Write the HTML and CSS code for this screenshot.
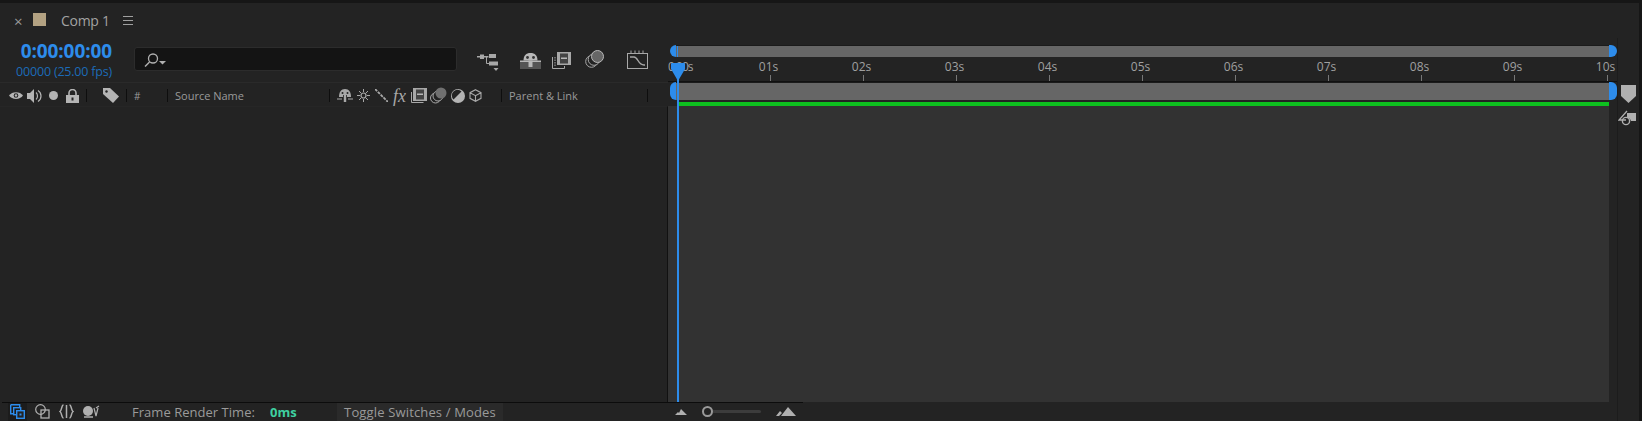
FILE: index.html
```html
<!DOCTYPE html>
<html lang="en">
<head>
<meta charset="UTF-8">
<title>Comp 1</title>
<link rel="stylesheet" href="styles.css">
</head>
<body>

<div id="panel">
    <div class="tabbar">
        <span class="close">×</span>
        <span class="swatch"></span>
        <span class="tabname">Comp 1</span>
        <svg class="menu" width="10" height="9" viewBox="0 0 10 9"><path d="M0 .5h10M0 4.5h10M0 8.5h10" stroke="#a0a0a0"/></svg>
    </div>

    <div class="main">
        <div class="left">
            <div class="controls">
                <div class="timecode">
                    <div class="time">0:00:00:00</div>
                    <div class="fps">00000 (25.00 fps)</div>
                </div>
                <div class="search">
                    <svg width="22" height="14" viewBox="0 0 22 14"><circle cx="9" cy="5.500" r="4.500" fill="none" stroke="#b0b0b0" stroke-width="1.300"/><path d="M5.500 9L1 13.500" stroke="#b0b0b0" stroke-width="1.500"/><path d="M15 8h7l-3.500 3.500z" fill="#b0b0b0"/></svg>
                </div>
                <div class="tools">
                    <svg class="tool-flow" width="22" height="18" viewBox="0 0 22 18"><path d="M0 3h3V1.500h4V3h4.500v1.500H7V6H3V4.500H0z" fill="#a8a8a8"/><path d="M9.500 4v6.500H13" fill="none" stroke="#a8a8a8"/><rect x="12" y="1" width="7" height="4" fill="#a8a8a8"/><rect x="12" y="8.500" width="9" height="4" fill="#a8a8a8"/><path d="M16.500 15h5l-2.500 3z" fill="#a8a8a8"/></svg>
                    <svg class="tool-shy" width="21" height="17" viewBox="0 0 21 17"><rect y="10" width="21" height="7" fill="#555"/><path d="M3.500 8.500C3.500 3.500 6 1 10.500 1s7 2.500 7 7.500z" fill="#b8b8b8"/><rect y="8.500" width="21" height="1.500" fill="#b8b8b8"/><rect x="8.500" y="8.500" width="4" height="6.500" fill="#b8b8b8"/><circle cx="7.500" cy="5.500" r="1.400" fill="#333"/><circle cx="13.500" cy="5.500" r="1.400" fill="#333"/></svg>
                    <svg class="tool-blend" width="19" height="18" viewBox="0 0 19 18"><path d="M.5 6v11.500h12V15" fill="none" stroke="#a8a8a8"/><path d="M3 6v9" stroke="#a8a8a8" stroke-dasharray="1.500 1"/><rect x="5" y="1" width="14" height="13" fill="#a8a8a8"/><rect x="8" y="2.500" width="8" height="10" fill="#444"/><rect x="9" y="6.500" width="6" height="1.500" fill="#b8b8b8"/></svg>
                    <svg class="tool-blur" width="19" height="18" viewBox="0 0 19 18"><circle cx="6.500" cy="11.500" r="5.800" fill="none" stroke="#a8a8a8"/><circle cx="9" cy="9.500" r="5.800" fill="#232323" stroke="#a8a8a8"/><circle cx="12.500" cy="6.500" r="6" fill="#666" stroke="#b8b8b8"/></svg>
                    <svg class="tool-graph" width="21" height="19" viewBox="0 0 21 19"><rect x=".5" y="3.500" width="20" height="15" fill="none" stroke="#a8a8a8"/><path d="M4 .5v3M8 .5v3M12 .5v3M16 .5v3" stroke="#a8a8a8"/><path d="M3 7h4c4 0 4 8 10 8h1" fill="none" stroke="#a8a8a8" stroke-width="1.300"/></svg>
                </div>
            </div>

            <div class="columns">
                <svg class="col-eye" width="14" height="9" viewBox="0 0 14 9"><path d="M0 4.500C3 0 11 0 14 4.500 11 9 3 9 0 4.500z" fill="#b4b4b4"/><circle cx="7" cy="4.500" r="2.300" fill="#232323"/><circle cx="7" cy="4.500" r="1.200" fill="#b4b4b4"/></svg>
                <svg class="col-sound" width="16" height="14" viewBox="0 0 16 14"><path d="M0 4h3l4-4v14l-4-4H0z" fill="#b4b4b4"/><path d="M9 3.500c2 1.500 2 5.500 0 7M11 1.500c4 2.500 4 8.500 0 11" fill="none" stroke="#b4b4b4" stroke-width="1.200"/></svg>
                <span class="col-dot"></span>
                <svg class="col-lock" width="13" height="14" viewBox="0 0 13 14"><path d="M3 6V4a3.500 3.500 0 0 1 7 0v2" fill="none" stroke="#b4b4b4" stroke-width="1.600"/><rect y="6" width="13" height="8" fill="#b4b4b4"/><rect x="5.500" y="8.500" width="2" height="3" fill="#232323"/></svg>
                <span class="sep sep-a"></span>
                <svg class="col-tag" width="16" height="15" viewBox="0 0 16 15"><path d="M0 0h7l9 8.500L10 15 0 6z" fill="#b4b4b4"/><circle cx="3.500" cy="3.500" r="1.200" fill="#232323"/></svg>
                <span class="sep sep-b"></span>
                <span class="col-num">#</span>
                <span class="sep sep-c"></span>
                <span class="col-source">Source Name</span>
                <span class="sep sep-d"></span>
                <svg class="sw-shy" width="16" height="13" viewBox="0 0 16 13"><path d="M2 8C2 3 4 0 8 0s6 3 6 8h-4V6H6v2z" fill="#a8a8a8"/><rect x="6.800" y="6" width="2.400" height="7" fill="#a8a8a8"/><path d="M0 10h5M11 10h5" stroke="#a8a8a8"/><circle cx="5.500" cy="4" r="1" fill="#232323"/><circle cx="10.500" cy="4" r="1" fill="#232323"/></svg>
                <svg class="sw-sun" width="13" height="13" viewBox="0 0 13 13"><circle cx="6.500" cy="6.500" r="2.500" fill="none" stroke="#a8a8a8" stroke-width="1.200"/><path d="M6.500 0v3M6.500 10v3M0 6.500h3M10 6.500h3M2 2l2 2M9 9l2 2M11 2L9 4M4 9l-2 2" stroke="#a8a8a8"/></svg>
                <svg class="sw-line" width="13" height="13" viewBox="0 0 13 13"><path d="M0 0l13 13" stroke="#a8a8a8" stroke-width="1.800" stroke-dasharray="3 1"/></svg>
                <span class="sw-fx">fx</span>
                <svg class="sw-frame" width="16" height="15" viewBox="0 0 16 15"><path d="M.5 4v10.500h12" fill="none" stroke="#a8a8a8"/><rect x="2" y="0" width="14" height="13" fill="#a8a8a8"/><rect x="5" y="1.500" width="8" height="10" fill="#444"/><rect x="6" y="5.500" width="6" height="1.500" fill="#b8b8b8"/></svg>
                <svg class="sw-blur" width="17" height="17" viewBox="0 0 17 17"><circle cx="5.500" cy="11" r="5" fill="none" stroke="#a8a8a8"/><circle cx="8" cy="9" r="5" fill="#232323" stroke="#a8a8a8"/><circle cx="11" cy="6" r="5.500" fill="#707070"/></svg>
                <svg class="sw-adj" width="14" height="14" viewBox="0 0 14 14"><circle cx="7" cy="7" r="7" fill="#b4b4b4"/><path d="M2.500 10.500A5.500 5.500 0 0 1 10.500 2.500z" fill="#232323"/></svg>
                <svg class="sw-cube" width="13" height="13" viewBox="0 0 13 13"><path d="M6.500.7l5.500 3v5.600l-5.500 3-5.500-3V3.700zM1 3.700l5.500 3 5.500-3M6.500 6.700v5.600" fill="none" stroke="#a8a8a8" stroke-width="1.100"/></svg>
                <span class="sep sep-e"></span>
                <span class="col-parent">Parent &amp; Link</span>
                <span class="sep sep-f"></span>
            </div>
            <div class="layers"></div>
        </div>

        <div class="timeline">
            <div class="navbar">
                <span class="handle handle-l"></span>
                <div class="bar"><span class="bar-mark"></span></div>
                <span class="handle handle-r"></span>
            </div>
            <div class="ruler">
                <div class="ticks">
                    <div class="tick tick-first"><span>0:00s</span></div>
                    <div class="tick"><span>01s</span><i></i></div>
                    <div class="tick"><span>02s</span><i></i></div>
                    <div class="tick"><span>03s</span><i></i></div>
                    <div class="tick"><span>04s</span><i></i></div>
                    <div class="tick"><span>05s</span><i></i></div>
                    <div class="tick"><span>06s</span><i></i></div>
                    <div class="tick"><span>07s</span><i></i></div>
                    <div class="tick"><span>08s</span><i></i></div>
                    <div class="tick"><span>09s</span><i></i></div>
                    <div class="tick"><span>10s</span><i></i></div>
                </div>
            </div>
            <div class="workarea">
                <span class="handle handle-l"></span>
                <div class="bar"></div>
                <span class="handle handle-r"></span>
            </div>
            <div class="duration"></div>
            <div class="tracks"></div>

            <div class="playhead">
                <svg width="14" height="18" viewBox="0 0 14 18"><path d="M1 0h12a1 1 0 0 1 1 1v5l-7 12L0 6V1a1 1 0 0 1 1-1z" fill="#2d8ceb"/></svg>
                <div class="playline"></div>
            </div>
        </div>

        <div class="side">
            <svg class="marker" width="15" height="18" viewBox="0 0 15 18"><path d="M0 0h15v11l-7.500 7L0 11z" fill="#b0b0b0"/></svg>
            <svg class="snap" width="18" height="16" viewBox="0 0 18 16"><path d="M9 1L1 10h7" fill="none" stroke="#b0b0b0" stroke-width="1.300"/><path d="M9 3h9v8h-5a4 4 0 0 0-4-3z" fill="#b0b0b0"/><circle cx="8" cy="11" r="3.600" fill="none" stroke="#b0b0b0" stroke-width="1.400"/></svg>
        </div>
    </div>

    <div class="footer">
        <div class="foot-icons">
            <span class="foot-active">
                <svg width="15" height="15" viewBox="0 0 15 15"><path d="M.7.700h9v3M.7.700v9h3" fill="none" stroke="#2d8ceb" stroke-width="1.400"/><rect x="3.700" y="3.700" width="7" height="7" fill="none" stroke="#2d8ceb" stroke-width="1.400"/><rect x="6.700" y="6.700" width="7.600" height="7.600" fill="#232323" stroke="#2d8ceb" stroke-width="1.400"/><rect x="9.500" y="9.500" width="2" height="2" fill="#2d8ceb"/></svg>
            </span>
            <svg width="15" height="15" viewBox="0 0 15 15"><circle cx="5.500" cy="5.500" r="4.800" fill="none" stroke="#b0b0b0" stroke-width="1.200"/><rect x="6" y="6" width="8" height="8" fill="none" stroke="#b0b0b0" stroke-width="1.300"/></svg>
            <svg width="15" height="15" viewBox="0 0 15 15"><path d="M4.500 1C2.500 1 3 6 1 7.500 3 9 2.500 14 4.500 14M10.500 1c2 0 1.500 5 3.500 6.500C12 9 12.500 14 10.500 14M7.500 1v13" fill="none" stroke="#b0b0b0" stroke-width="1.500"/></svg>
            <svg width="17" height="13" viewBox="0 0 17 13"><path d="M1 12h9" stroke="#b0b0b0" stroke-width="1.500"/><circle cx="5" cy="6" r="5" fill="#b0b0b0"/><path d="M11 3l2 8 2-8M13 3l3-2" fill="none" stroke="#b0b0b0" stroke-width="1.200"/></svg>
        </div>
        <span class="render-label">Frame Render Time:</span>
        <span class="render-value">0ms</span>
        <span class="toggle">Toggle Switches / Modes</span>
        <div class="zoom">
            <svg width="12" height="6" viewBox="0 0 12 6"><path d="M0 6l3-3 1 1 2-4 6 6z" fill="#b0b0b0"/></svg>
            <div class="slider"><span class="knob"></span></div>
            <svg width="20" height="9" viewBox="0 0 20 9"><path d="M0 9l4-5 2 2-3 3zM5 9l7-9 8 9z" fill="#b0b0b0"/></svg>
        </div>
        <span class="foot-line"></span>
    </div>
</div>

</body>
</html>
```

FILE: styles.css
```css
html, body {
    margin: 0;
    padding: 0;
    background: #161616;
}
#panel {
    width: 1639px;
    height: 418px;
    margin-top: 3px;
    background: #232323;
    display: flex;
    flex-direction: column;
    font-family: "Open Sans", sans-serif;
    color: #9a9a9a;
    overflow: hidden;
}
svg {
    display: block;
    flex: none;
}

/* tab */
.tabbar {
    height: 35px;
    display: flex;
    align-items: center;
    flex: none;
}
.close {
    margin-left: 14px;
    width: 9px;
    font-size: 15px;
    line-height: 15px;
    margin-top: 2px;
}
.swatch {
    width: 13px;
    height: 13px;
    margin-left: 10px;
    margin-top: -3px;
    background: #b3a282;
}
.tabname {
    margin-left: 15px;
    width: 62px;
    font-size: 14px;
    color: #a2a2a2;
    letter-spacing: -0.3px;
}
.menu {
    margin-top: -1px;
}

.main {
    flex: 1;
    display: flex;
    min-height: 0;
}

/* left */
.left {
    width: 668px;
    flex: none;
    display: flex;
    flex-direction: column;
}
.controls {
    height: 44px;
    display: flex;
    flex: none;
}
.timecode {
    width: 134px;
    text-align: right;
    padding-right: 22px;
    box-sizing: border-box;
    padding-top: 1px;
}
.time {
    color: #2d8ceb;
    font-size: 19px;
    font-weight: 700;
    line-height: 24px;
    letter-spacing: -0.1px;
}
.fps {
    color: #1c6bb8;
    font-size: 12.500px;
    line-height: 17px;
    letter-spacing: -0.2px;
    white-space: nowrap;
}
.search {
    width: 323px;
    height: 24px;
    margin-top: 9px;
    background: #141414;
    border: 1px solid #2c2c2c;
    border-radius: 3px;
    box-sizing: border-box;
    padding: 5px 0 0 9px;
}
.tools {
    display: flex;
    align-items: flex-start;
    padding-top: 12px;
}
.tool-flow { margin-left: 20px; margin-top: 3px; }
.tool-shy { margin-left: 21px; margin-top: 2px; }
.tool-blend { margin-left: 11px; margin-top: 1px; }
.tool-blur { margin-left: 14px; }
.tool-graph { margin-left: 23px; }

.columns {
    height: 24px;
    padding: 2px 1px 0 0;
    display: flex;
    align-items: center;
    border-top: 1px solid #2a2a2a;
    flex: none;
    font-size: 11px;
    box-sizing: border-box;
}
.col-eye { margin-left: 9px; }
.col-sound { margin-left: 4px; }
.col-dot {
    width: 9px;
    height: 9px;
    margin-left: 6px;
    border-radius: 50%;
    background: #b4b4b4;
}
.col-lock { margin-left: 8px; }
.sep {
    width: 1px;
    height: 13px;
    background: #0e0e0e;
    flex: none;
}
.sep-a { margin-left: 7px; }
.col-tag { margin-left: 16px; }
.sep-b { margin-left: 7px; }
.col-num { margin-left: 7px; width: 33px; font-size: 10px; }
.sep-c { margin-left: 0; }
.col-source { margin-left: 7px; width: 154px; white-space: nowrap; }
.sep-d { }
.sw-shy { margin-left: 7px; }
.sw-sun { margin-left: 4px; }
.sw-line { margin-left: 5px; }
.sw-fx {
    margin-left: 5px;
    width: 14px;
    font-family: "Liberation Serif", serif;
    font-style: italic;
    font-size: 18px;
    line-height: 18px;
    color: #a8a8a8;
}
.sw-frame { margin-left: 4px; }
.sw-blur { margin-left: 3px; }
.sw-adj { margin-left: 4px; }
.sw-cube { margin-left: 4px; }
.sep-e { margin-left: 19px; }
.col-parent { margin-left: 7px; width: 138px; white-space: nowrap; }
.layers {
    flex: 1;
    margin-bottom: 19px;
    border-right: 1px solid #111;
    border-top: 1px solid #262626;
}

/* timeline */
.timeline {
    width: 949px;
    flex: none;
    display: flex;
    flex-direction: column;
    position: relative;
}
.navbar {
    display: flex;
    height: 12px;
    margin-top: 7px;
    padding-left: 2px;
    flex: none;
}
.bar {
    flex: 1;
    background: #666;
    border-top: 1px solid #1b1b1b;
    position: relative;
}
.bar-mark {
    position: absolute;
    left: 1px;
    top: 0;
    bottom: 0;
    width: 1px;
    background: #2d8ceb;
}
.handle {
    width: 6px;
    background: #2d8ceb;
    flex: none;
}
.handle-l { border-radius: 6px 0 0 6px; }
.handle-r { border-radius: 0 6px 6px 0; width: 8px; }
.ruler {
    height: 25px;
    overflow: hidden;
    flex: none;
    box-sizing: border-box;
    border-bottom: 1px solid #111;
}
.ticks {
    width: 931px;
    height: 24px;
    margin-left: 9px;
    display: flex;
    justify-content: space-between;
}
.tick {
    width: 1px;
    height: 24px;
    display: flex;
    flex-direction: column;
    align-items: center;
    justify-content: space-between;
    font-size: 12px;
    color: #a0a0a0;
}
.tick span {
    margin-top: 2px;
    margin-right: 4px;
    line-height: 16px;
    white-space: nowrap;
}
.tick-first span {
    align-self: flex-start;
    margin-left: -9px;
    letter-spacing: -1px;
}
.tick i {
    width: 1px;
    height: 6px;
    background: #777;
    flex: none;
}
.workarea {
    display: flex;
    height: 18px;
    padding-left: 2px;
    flex: none;
}
.duration {
    height: 4px;
    width: 931px;
    margin: 2px 0 0 10px;
    background: #0ec01f;
    flex: none;
}
.tracks {
    flex: 1;
    width: 941px;
    margin-bottom: 19px;
    background: #323232;
}
.playhead {
    position: absolute;
    left: 3px;
    top: 25px;
    bottom: 19px;
    width: 14px;
    display: flex;
    flex-direction: column;
    align-items: center;
}
.playhead svg {
    margin-bottom: -6px;
}
.playline {
    flex: 1;
    width: 2px;
    background: #2d8ceb;
}

/* right strip */
.side {
    flex: 1;
    border-left: 1px solid #1c1c1c;
    display: flex;
    flex-direction: column;
    align-items: flex-end;
    padding-right: 3px;
}
.marker { margin-top: 47px; }
.snap { margin-top: 7px; }

/* footer */
.footer {
    height: 19px;
    margin-top: -19px;
    width: 803px;
    flex: none;
    display: flex;
    align-items: center;
    position: relative;
    font-size: 13px;
}
.foot-line {
    position: absolute;
    left: 2px;
    right: 0;
    top: 0;
    height: 1px;
    background: #0c0c0c;
}
.foot-icons {
    display: flex;
    align-items: center;
    gap: 9px;
    margin-left: 8px;
    width: 124px;
}
.foot-active {
    background: #1c1c1c;
    padding: 2px;
    margin-right: -1px;
}
.render-label {
    width: 138px;
    white-space: nowrap;
    letter-spacing: 0.03px;
}
.render-value {
    width: 67px;
    color: #3fd0a0;
    font-weight: 700;
    font-size: 13px;
}
.toggle {
    width: 166px;
    height: 18px;
    margin-top: 1px;
    line-height: 18px;
    text-align: center;
    background: #2a2a2a;
    white-space: nowrap;
    letter-spacing: 0.15px;
}
.zoom {
    display: flex;
    align-items: center;
    margin-left: 172px;
}
.slider {
    width: 59px;
    height: 3px;
    margin: 0 15px 0 15px;
    background: #3c3c3c;
    border-radius: 2px;
    display: flex;
    align-items: center;
}
.knob {
    width: 7px;
    height: 7px;
    border: 2.500px solid #9a9a9a;
    border-radius: 50%;
    background: #232323;
    flex: none;
}
```
